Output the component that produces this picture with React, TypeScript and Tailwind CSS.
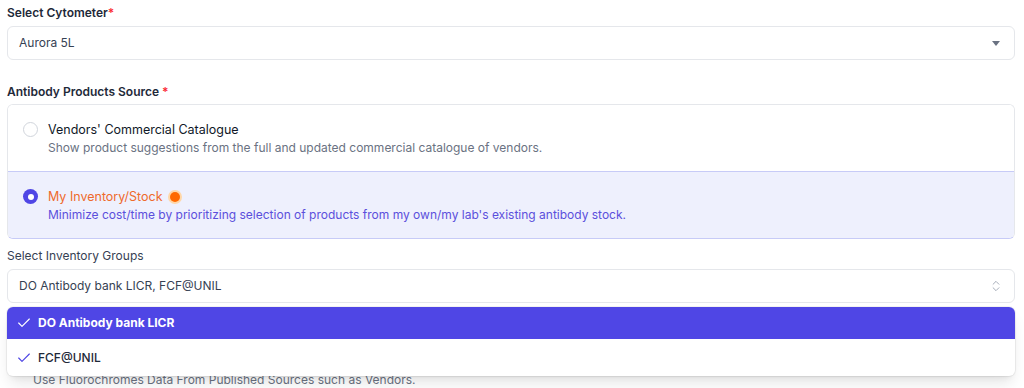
import { Check, ChevronsUpDown } from "lucide-react";

function RadioOption({
  selected,
  title,
  description,
}: {
  selected: boolean;
  title: string;
  description: string;
}) {
  return (
    <div
      className={
        selected
          ? "flex h-[66px] items-start gap-[10px] bg-[#eef0fd] pl-[15px] pr-[16px] pt-[16px]"
          : "flex h-[66px] items-start gap-[10px] bg-white pl-[15px] pr-[16px] pt-[16px]"
      }
    >
      {selected ? (
        <span className="mt-[1px] flex h-[15px] w-[15px] items-center justify-center rounded-full bg-[#4f46e5]">
          <span className="h-[6px] w-[6px] rounded-full bg-white" />
        </span>
      ) : (
        <span className="mt-[1px] h-[15px] w-[15px] rounded-full border border-gray-300 bg-white" />
      )}
      <div className="flex flex-col">
        <div className="flex items-center gap-[5px]">
          <span
            className={
              selected
                ? "text-[12.5px] leading-[18px] text-[#ee6a2c]"
                : "text-[12.5px] leading-[18px] text-gray-900"
            }
          >
            {title}
          </span>
          {selected && (
            <span className="flex h-[14px] w-[14px] items-center justify-center rounded-full bg-orange-200">
              <span className="h-[10px] w-[10px] rounded-full bg-orange-500" />
            </span>
          )}
        </div>
        <span
          className={
            selected
              ? "text-[12px] leading-[18px] text-[#5b4fdc]"
              : "text-[12px] leading-[18px] text-gray-500"
          }
        >
          {description}
        </span>
      </div>
    </div>
  );
}

export default function App() {
  return (
    <div
      className="h-[388px] overflow-hidden bg-white px-[7px] pt-[4px] pr-[9px]"
      style={{ fontFamily: "Inter, 'Noto Sans', sans-serif" }}
    >
      <label className="block text-[12px] font-semibold leading-[18px] text-gray-800">
        Select Cytometer<span className="text-red-500">*</span>
      </label>
      <div className="mt-[4px] flex h-[34px] items-center justify-between rounded-md border border-gray-200 bg-white pl-[11px] pr-[14px]">
        <span className="text-[12px] text-gray-700">Aurora 5L</span>
        <span className="h-0 w-0 border-x-[4px] border-t-[5px] border-x-transparent border-t-gray-500" />
      </div>

      <label className="mt-[23px] block text-[12px] font-semibold leading-[18px] text-gray-800">
        Antibody Products Source <span className="text-red-500">*</span>
      </label>
      <div className="mt-[3px] overflow-hidden rounded-md border border-gray-200 border-b-[#c7cbf7]">
        <RadioOption
          selected={false}
          title="Vendors' Commercial Catalogue"
          description="Show product suggestions from the full and updated commercial catalogue of vendors."
        />
        <div className="border-t border-[#c7cbf7]">
          <RadioOption
            selected={true}
            title="My Inventory/Stock"
            description="Minimize cost/time by prioritizing selection of products from my own/my lab's existing antibody stock."
          />
        </div>
      </div>

      <label className="mt-[8px] block text-[12px] leading-[18px] text-gray-700">
        Select Inventory Groups
      </label>
      <div className="relative">
        <div className="mt-[4px] flex h-[34px] items-center justify-between rounded-md border border-gray-200 bg-white pl-[11px] pr-[11px]">
          <span className="text-[12px] text-gray-700">DO Antibody bank LICR, FCF@UNIL</span>
          <ChevronsUpDown size={14} strokeWidth={1.5} className="text-gray-400" />
        </div>
        <div className="absolute left-0 right-0 top-[38px] z-10 overflow-hidden rounded-md bg-white shadow-lg ring-1 ring-black/5">
          <div className="flex h-[32px] items-center gap-[6px] bg-[#4f46e5] pl-[9px] text-[12px] font-bold text-white">
            <Check size={16} strokeWidth={1.75} />
            <span>DO Antibody bank LICR</span>
          </div>
          <div className="flex h-[37px] items-center gap-[6px] pl-[9px] text-[12px] font-medium text-gray-800">
            <Check size={16} strokeWidth={1.75} className="text-[#4f46e5]" />
            <span>FCF@UNIL</span>
          </div>
        </div>
        <p className="mt-[69px] pl-[26px] text-[12px] leading-[16px] text-gray-500">
          Use Fluorochromes Data From Published Sources such as Vendors.
        </p>
      </div>
    </div>
  );
}
